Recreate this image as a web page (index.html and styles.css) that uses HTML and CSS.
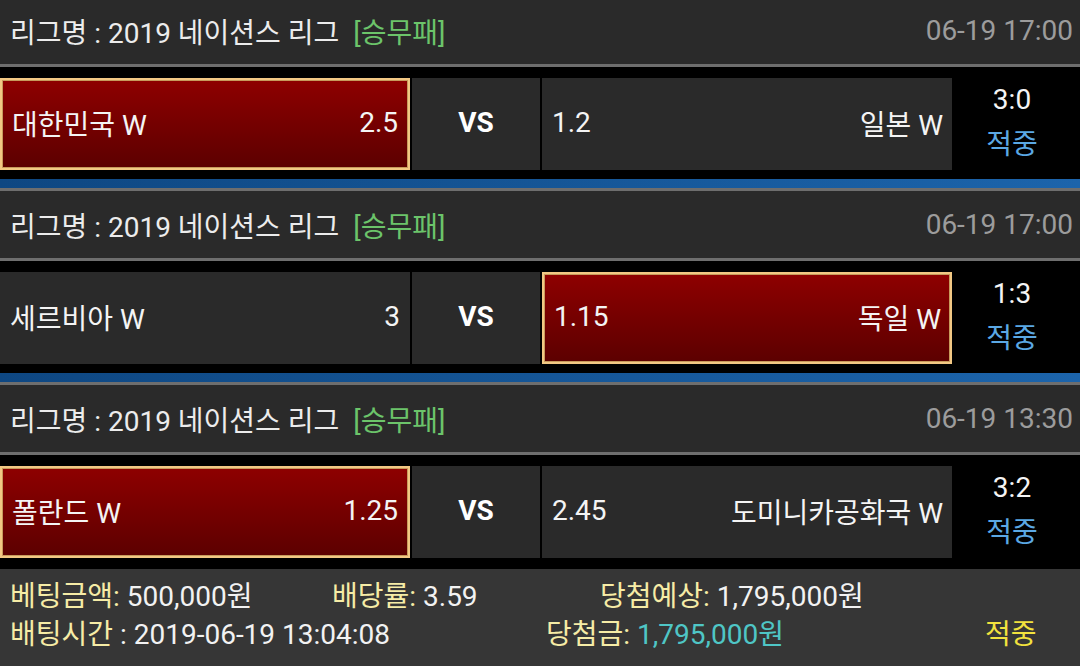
FILE: index.html
```html
<!DOCTYPE html>
<html lang="ko">
<head>
    <meta charset="UTF-8" />
    <meta name="viewport" content="width=device-width, initial-scale=1.0" />
    <title>배팅내역</title>
    <link rel="stylesheet" href="styles.css">
</head>
<body>
    <div class="bet-list">
        <div class="match">
            <div class="match-head">
                <span class="league">리그명 : 2019 네이션스 리그</span>
                <span class="bet-type">[승무패]</span>
                <span class="match-time">06-19 17:00</span>
            </div>
            <div class="match-row">
                <div class="cell home picked"><span>대한민국 W</span><span>2.5</span></div>
                <div class="cell vs">VS</div>
                <div class="cell away"><span>1.2</span><span>일본 W</span></div>
                <div class="result"><span class="score">3:0</span><span class="hit">적중</span></div>
            </div>
            <div class="divider"></div>
        </div>

        <div class="match">
            <div class="match-head">
                <span class="league">리그명 : 2019 네이션스 리그</span>
                <span class="bet-type">[승무패]</span>
                <span class="match-time">06-19 17:00</span>
            </div>
            <div class="match-row">
                <div class="cell home"><span>세르비아 W</span><span>3</span></div>
                <div class="cell vs">VS</div>
                <div class="cell away picked"><span>1.15</span><span>독일 W</span></div>
                <div class="result"><span class="score">1:3</span><span class="hit">적중</span></div>
            </div>
            <div class="divider"></div>
        </div>

        <div class="match">
            <div class="match-head">
                <span class="league">리그명 : 2019 네이션스 리그</span>
                <span class="bet-type">[승무패]</span>
                <span class="match-time">06-19 13:30</span>
            </div>
            <div class="match-row">
                <div class="cell home picked"><span>폴란드 W</span><span>1.25</span></div>
                <div class="cell vs">VS</div>
                <div class="cell away"><span>2.45</span><span>도미니카공화국 W</span></div>
                <div class="result"><span class="score">3:2</span><span class="hit">적중</span></div>
            </div>
        </div>
    </div>

    <div class="summary">
        <div class="summary-line first">
            <span class="item amount"><b>베팅금액:</b> 500,000원</span>
            <span class="item rate"><b>배당률:</b> 3.59</span>
            <span class="item expect"><b>당첨예상:</b> 1,795,000원</span>
        </div>
        <div class="summary-line second">
            <span class="item time"><b>배팅시간</b> : 2019-06-19 13:04:08</span>
            <span class="item prize"><b>당첨금:</b> <em>1,795,000원</em></span>
            <span class="item status">적중</span>
        </div>
    </div>
</body>
</html>
```

FILE: styles.css
```css
body {
    margin: 0;
    background: #000;
    color: #f2f2f2;
    font-family: Roboto, "Noto Sans CJK KR", sans-serif;
    font-size: 28px;
    width: 1080px;
    height: 666px;
    overflow: hidden;
}
.bet-list {
    margin-top: -3px; /* bovenste kop valt net buiten beeld */
}
.match-head {
    display: flex;
    align-items: center;
    height: 67px;
    padding: 0 7px 0 10px;
    background: #2a2a2a;
    border-bottom: 3px solid #6e6e6e;
}
.league {
    color: #ececec;
}
.bet-type {
    color: #6cc46a;
    margin-left: 14px;
}
.match-time {
    margin-left: auto;
    color: #9c9c9c;
}
.match-row {
    display: grid;
    grid-template-columns: 410px 128px 410px 1fr;
    column-gap: 2px;
    padding: 11px 0 9px;
}
.cell {
    height: 92px;
    box-sizing: border-box;
    background: #2a2a2a;
    display: flex;
    align-items: center;
    justify-content: space-between;
    color: #f4f4f4;
    white-space: nowrap;
    padding-bottom: 3px;
}
.cell.home {
    padding-left: 10px;
    padding-right: 10px;
}
.cell.away {
    padding-left: 10px;
    padding-right: 9px;
}
.cell.vs {
    justify-content: center;
    font-weight: bold;
    color: #fff;
}
.cell.picked {
    background: linear-gradient(to bottom, #8e0000, #5c0000);
    border: 2px solid #f2c884;
    box-shadow: inset 0 0 0 1px #c79a5c;
}
.result {
    display: flex;
    flex-direction: column;
    align-items: center;
    justify-content: center;
    gap: 4px;
    padding-right: 10px;
    padding-bottom: 2px;
    line-height: 1.45;
}
.score {
    color: #f4f4f4;
}
.hit {
    color: #5ba8e4;
}
.divider {
    height: 9px;
    background: linear-gradient(to right, #0e4782, #1c64ab);
    border-bottom: 3px solid #6e6e6e;
}
.summary {
    margin-top: 2px;
    background: #363636;
    height: 98px;
    padding: 6px 0 0 10px;
    box-sizing: border-box;
}
.summary-line {
    display: flex;
    height: 38px;
    align-items: center;
    white-space: nowrap;
}
.summary b {
    font-weight: normal;
    color: #f6eca6;
}
.summary em {
    font-style: normal;
    color: #4fc6c6;
}
.item.amount {
    width: 322px;
}
.item.rate {
    width: 268px;
}
.item.time {
    width: 536px;
}
.item.prize {
    width: 439px;
}
.item.status {
    color: #f2e23e;
}
```
